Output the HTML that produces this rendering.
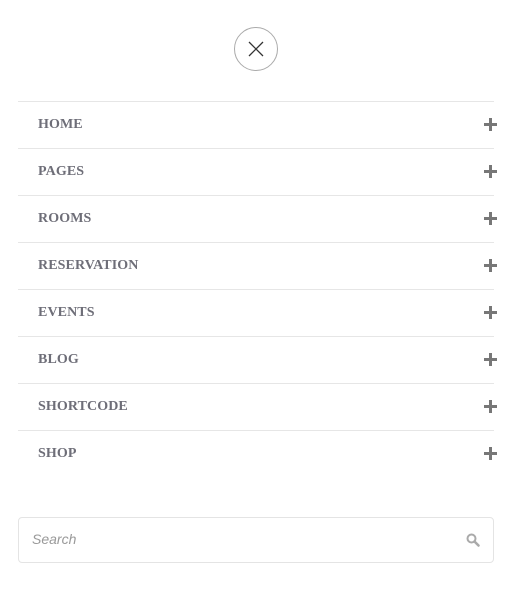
<!DOCTYPE html>
<html><head><meta charset="utf-8"><style>
*{margin:0;padding:0;box-sizing:border-box}
body{width:511px;height:607px;background:#fff;position:relative;overflow:hidden;font-family:"Liberation Serif",serif}
.close{position:absolute;left:234px;top:27px;width:44px;height:44px;border:1px solid #aaa;border-radius:50%}
.close svg{position:absolute;left:13px;top:13px}
ul{position:absolute;left:18px;top:101px;width:476px;list-style:none}
li{height:47px;border-top:1px solid #e6e6e6;position:relative;text-transform:uppercase;font-weight:bold;font-size:14px;color:#6e6e78;line-height:45px;padding-left:20px;letter-spacing:0.1px}
li .p{position:absolute;right:-3px;top:16px;width:13px;height:13px}
li .p:before{content:"";position:absolute;left:0;top:5px;width:13px;height:3px;background:#777}
li .p:after{content:"";position:absolute;left:5px;top:0;width:3px;height:13px;background:#777}
.search{position:absolute;left:18px;top:517px;width:476px;height:46px;border:1px solid #e4e4e4;border-radius:4px}
.search span{position:absolute;left:13px;top:13px;font-family:"Liberation Sans",sans-serif;font-style:italic;font-size:14px;color:#999}
.search svg{position:absolute;right:13px;top:15px}
</style></head><body>
<div class="close"><svg width="16" height="16" viewBox="0 0 16 16"><path d="M1 1L15 15M15 1L1 15" stroke="#333" stroke-width="1.3"/></svg></div>
<ul>
<li>Home<i class="p"></i></li>
<li>Pages<i class="p"></i></li>
<li>Rooms<i class="p"></i></li>
<li>Reservation<i class="p"></i></li>
<li>Events<i class="p"></i></li>
<li>Blog<i class="p"></i></li>
<li>Shortcode<i class="p"></i></li>
<li style="border-bottom:0">Shop<i class="p"></i></li>
</ul>
<div class="search"><span>Search</span><svg width="14" height="14" viewBox="0 0 14 14"><circle cx="5.5" cy="5.5" r="4" fill="none" stroke="#aaa" stroke-width="2"/><path d="M8.5 8.5L12.5 12.5" stroke="#aaa" stroke-width="2.5" stroke-linecap="round"/></svg></div>
</body></html>
